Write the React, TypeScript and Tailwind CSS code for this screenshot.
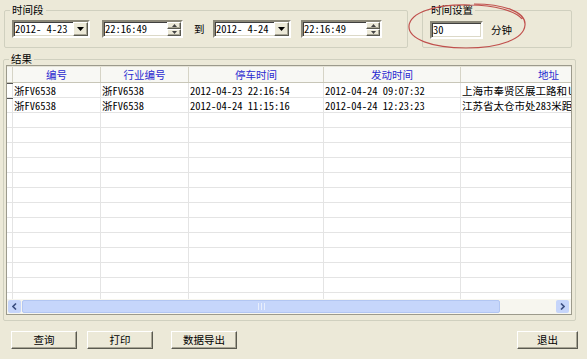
import React from "react";

const MONO = { fontFamily: '"Noto Sans Mono CJK SC", "DejaVu Sans Mono", "Noto Sans CJK SC", monospace' };

const columns = [
  { key: "no", label: "编号", width: "w-[88px]" },
  { key: "trade", label: "行业编号", width: "w-[88px]" },
  { key: "stop", label: "停车时间", width: "w-[135px]" },
  { key: "start", label: "发动时间", width: "w-[137px]" },
  { key: "addr", label: "地址", width: "w-[176px]" },
];

const rows = [
  ["浙FV6538", "浙FV6538", "2012-04-23 22:16:54", "2012-04-24 09:07:32", "上海市奉贤区展工路和l"],
  ["浙FV6538", "浙FV6538", "2012-04-24 11:15:16", "2012-04-24 12:23:23", "江苏省太仓市处283米距"],
];

const sunken =
  "border-2 border-t-[#8a8778] border-l-[#8a8778] border-b-white border-r-white shadow-[inset_1px_1px_0_#3f3f3f,inset_-1px_-1px_0_#dcd9c8] bg-white";
const raised =
  "border border-t-white border-l-white border-b-[#5a5a50] border-r-[#5a5a50] shadow-[inset_-1px_-1px_0_#a8a595] bg-[#ECE9D8]";

function DatePicker({ value }: { value: string }) {
  return (
    <div className={`flex h-[18px] w-[78px] items-stretch ${sunken}`}>
      <span className="flex-1 pl-[1px] leading-[14px] whitespace-pre" style={MONO}>
        {value}
      </span>
      <div className={`flex w-[15px] items-center justify-center ${raised}`}>
        <svg width="7" height="4" viewBox="0 0 7 4">
          <path d="M0 0h7L3.5 4z" fill="#000" />
        </svg>
      </div>
    </div>
  );
}

function TimeBox({ value }: { value: string }) {
  return (
    <div className={`flex h-[18px] w-[81px] items-stretch ${sunken}`}>
      <span className="flex-1 pl-[1px] leading-[14px]" style={MONO}>
        {value}
      </span>
      <div className="flex w-[14px] flex-col">
        <div className={`flex flex-1 items-center justify-center ${raised}`}>
          <svg width="5" height="3" viewBox="0 0 5 3">
            <path d="M2.5 0L5 3H0z" fill="#444" />
          </svg>
        </div>
        <div className={`flex flex-1 items-center justify-center ${raised}`}>
          <svg width="5" height="3" viewBox="0 0 5 3">
            <path d="M0 0h5L2.5 3z" fill="#444" />
          </svg>
        </div>
      </div>
    </div>
  );
}

function Button({ label, width }: { label: string; width: string }) {
  return (
    <div className={`flex h-[18px] ${width} items-center justify-center ${raised}`}>{label}</div>
  );
}

export default function App() {
  const emptyRows = Array.from({ length: 13 });

  return (
    <div
      className="relative h-[359px] w-[587px] overflow-hidden bg-[#ECE9D8] text-[10.5px] text-black"
      style={{ fontFamily: '"Noto Sans CJK SC", "Liberation Sans", sans-serif' }}
    >
      {/* Top filters */}
      <div className="flex pl-[4px] pt-[4px]">
        <fieldset className="w-[404px] rounded-[2px] border border-[#D0D0BF] px-[7px] pb-[9px] pt-[4px]">
          <legend className="ml-[-2px] px-[2px] leading-[12px]">时间段</legend>
          <div className="flex items-center">
            <DatePicker value="2012- 4-23" />
            <div className="ml-[12px]">
              <TimeBox value="22:16:49" />
            </div>
            <span className="ml-[11px] w-[11px]">到</span>
            <div className="ml-[8px]">
              <DatePicker value="2012- 4-24" />
            </div>
            <div className="ml-[10px]">
              <TimeBox value="22:16:49" />
            </div>
          </div>
        </fieldset>

        <fieldset className="ml-[14px] w-[150px] rounded-[2px] border border-[#D0D0BF] px-[7px] pb-[8px] pt-[5px]">
          <legend className="ml-[-1px] px-[2px] leading-[12px]">时间设置</legend>
          <div className="flex items-center">
            <div className={`h-[18px] w-[53px] pl-[1px] leading-[14px] ${sunken}`} style={MONO}>
              30
            </div>
            <span className="ml-[8px]">分钟</span>
          </div>
        </fieldset>
      </div>

      {/* Results */}
      <fieldset className="ml-[3px] mt-[5px] w-[573px] rounded-[2px] border border-[#D0D0BF] px-[2px] pb-[5px]">
        <legend className="ml-[3px] px-[2px] leading-[12px]">结果</legend>
        <div className="flex h-[250px] w-[566px] flex-col overflow-hidden border border-[#9c9a8c] bg-white">
          <div className="flex-1 overflow-hidden">
            <div className="flex h-[17px] w-[630px] border-b border-t border-b-[#c8c6b8] border-t-[#e6e4d8] bg-[#f8f8f4]">
              <div className="w-[6px] border-r border-[#d6d4c6]" />
              {columns.map((c) => (
                <div
                  key={c.key}
                  className={`${c.width} border-r border-[#d6d4c6] text-center leading-[15px] text-[#2a2ad0]`}
                >
                  {c.label}
                </div>
              ))}
            </div>
            {rows.map((r, i) => (
              <div key={i} className="flex h-[15px] w-[630px] border-b border-[#e4e4e4]" style={MONO}>
                <div className="relative w-[6px] border-r border-[#e4e4e4]">
                  <div className="absolute left-0 top-0 h-[1px] w-[6px] bg-[#555]" />
                </div>
                {r.map((v, j) => (
                  <div
                    key={j}
                    className={`${columns[j].width} overflow-hidden whitespace-nowrap border-r border-[#e4e4e4] pl-[1px] leading-[15px]`}
                  >
                    {v}
                  </div>
                ))}
              </div>
            ))}
            {emptyRows.map((_, i) => (
              <div key={i} className="flex h-[15px] w-[630px] border-b border-[#e4e4e4]">
                <div className="w-[6px] border-r border-[#e4e4e4]" />
                {columns.map((c) => (
                  <div key={c.key} className={`${c.width} border-r border-[#e4e4e4]`} />
                ))}
              </div>
            ))}
          </div>

          {/* Horizontal scrollbar */}
          <div className="flex h-[15px] items-stretch bg-[#f7f6ef] p-[1px]">
            <div className="flex w-[13px] items-center justify-center rounded-[2px] bg-[#c6d5fa]">
              <svg width="5" height="7" viewBox="0 0 5 7">
                <path d="M4 0.5L1 3.5L4 6.5" stroke="#3c4f80" strokeWidth="1.6" fill="none" />
              </svg>
            </div>
            <div className="relative ml-[1px] flex w-[478px] items-center justify-center rounded-[2px] border border-[#b2c6f2] bg-[#c6d6fb]">
              <svg width="7" height="7" viewBox="0 0 7 7">
                <path d="M0.5 0v7M3.5 0v7M6.5 0v7" stroke="#e8eefc" strokeWidth="1" />
              </svg>
            </div>
            <div className="flex-1" />
            <div className="flex w-[13px] items-center justify-center rounded-[2px] bg-[#c6d5fa]">
              <svg width="5" height="7" viewBox="0 0 5 7">
                <path d="M1 0.5L4 3.5L1 6.5" stroke="#3c4f80" strokeWidth="1.6" fill="none" />
              </svg>
            </div>
            <div className="w-[1px]" />
          </div>
        </div>
      </fieldset>

      {/* Actions */}
      <div className="mt-[10px] flex pl-[11px] pr-[9px]">
        <Button label="查询" width="w-[66px]" />
        <div className="ml-[10px]">
          <Button label="打印" width="w-[66px]" />
        </div>
        <div className="ml-[18px]">
          <Button label="数据导出" width="w-[66px]" />
        </div>
        <div className="ml-auto">
          <Button label="退出" width="w-[61px]" />
        </div>
      </div>

      {/* Annotation */}
      <svg className="absolute left-[404px] top-[1px]" width="126" height="50" viewBox="0 0 126 50">
        <path
          d="M70 3C100 3 122 11 121 24C120 38 96 47 62 47C28 47 4 38 5 25C6 12 30 3 66 4C90 4 112 10 118 18"
          stroke="#c0504d"
          strokeWidth="1.2"
          fill="none"
        />
      </svg>
    </div>
  );
}
